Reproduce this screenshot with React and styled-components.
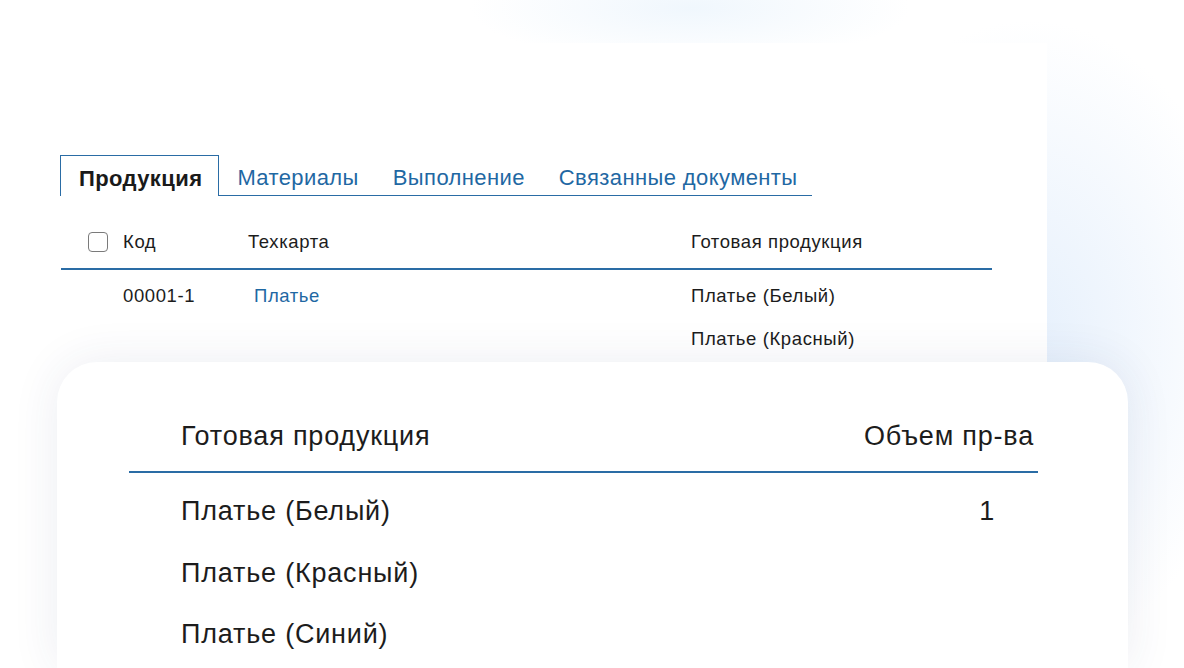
import styled, { createGlobalStyle } from "styled-components";

const GlobalStyle = createGlobalStyle`
  html, body {
    margin: 0;
    padding: 0;
    background: #fff;
  }
  body {
    font-family: "Liberation Sans", Arial, sans-serif;
    color: #1c1c1c;
  }
`;

const blue = "#2a6ca5";
const link = "#1f68a3";

const Page = styled.div`
  width: 1184px;
  height: 668px;
  overflow: hidden;
  background:
    radial-gradient(ellipse 220px 55px at 690px 8px, #f0f7fd 0%, rgba(240, 247, 253, 0) 100%),
    radial-gradient(ellipse 220px 320px at 1030px 340px, #e6f0fc 0%, rgba(230, 240, 252, 0) 100%),
    #fff;
  display: flex;
  flex-direction: column;
`;

const BackPanel = styled.section`
  width: 1047px;
  height: 319px;
  margin-top: 43px;
  padding: 112px 0 0 60px;
  box-sizing: border-box;
  background: #fff;
`;

const Tabs = styled.nav`
  display: flex;
  align-items: flex-end;
`;

const Tab = styled.div`
  height: 41px;
  box-sizing: border-box;
  display: flex;
  align-items: center;
  font-size: 22px;
  letter-spacing: 0.4px;
  padding: ${(p) => (p.$active ? "5px 16px 0 18px" : "5px 17px 0 17px")};
  color: ${(p) => (p.$active ? "#1a1a1a" : link)};
  font-weight: ${(p) => (p.$active ? 700 : 400)};
  border: ${(p) => (p.$active ? `1.5px solid ${blue}` : "none")};
  border-bottom: ${(p) => (p.$active ? "none" : `1.5px solid ${blue}`)};
  &:nth-child(2) {
    padding-left: 18px;
  }
  &:last-child {
    padding-right: 14px;
  }
`;

const Table = styled.div`
  width: 931px;
  margin-top: 20px;
  margin-left: 1px;
  font-size: 18.5px;
  letter-spacing: 0.6px;
`;

const HeadRow = styled.div`
  display: grid;
  grid-template-columns: 62px 125px 443px 1fr;
  align-items: center;
  height: 52px;
  border-bottom: 2px solid ${blue};
`;

const BodyRow = styled.div`
  display: grid;
  grid-template-columns: 62px 125px 443px 1fr;
  align-items: start;
  padding-top: 4px;
  line-height: 43px;
`;

const CheckCell = styled.div`
  display: flex;
  align-items: center;
  padding-left: 27px;
`;

const Checkbox = styled.span`
  width: 20px;
  height: 20px;
  box-sizing: border-box;
  border: 1.5px solid #7a7a7a;
  border-radius: 4px;
  background: #fff;
`;

const Cell = styled.div`
  color: ${(p) => (p.$link ? link : "#1c1c1c")};
  padding-left: ${(p) => (p.$link ? "6px" : "0")};
`;

const Card = styled.section`
  width: 1071px;
  margin-left: 57px;
  flex: 1;
  background: #fff;
  border-radius: 40px 40px 0 0;
  box-shadow: 0 0 48px rgba(40, 60, 110, 0.09);
  padding: 50px 0 0 72px;
  box-sizing: border-box;
  font-size: 27px;
  letter-spacing: 0.8px;
`;

const CardTable = styled.div`
  width: 909px;
`;

const CardHead = styled.div`
  display: flex;
  justify-content: space-between;
  line-height: 48px;
  padding: 0 4px 11px 52px;
  border-bottom: 2.5px solid ${blue};
`;

const CardBody = styled.div`
  padding-top: 8px;
`;

const CardRow = styled.div`
  display: flex;
  justify-content: space-between;
  line-height: 61.5px;
  padding: 0 43px 0 52px;
`;

const products = ["Платье (Белый)", "Платье (Красный)", "Платье (Синий)"];

export default function App() {
  return (
    <Page>
      <GlobalStyle />
      <BackPanel>
        <Tabs>
          <Tab $active>Продукция</Tab>
          <Tab>Материалы</Tab>
          <Tab>Выполнение</Tab>
          <Tab>Связанные документы</Tab>
        </Tabs>
        <Table>
          <HeadRow>
            <CheckCell>
              <Checkbox />
            </CheckCell>
            <Cell>Код</Cell>
            <Cell>Техкарта</Cell>
            <Cell>Готовая продукция</Cell>
          </HeadRow>
          <BodyRow>
            <div />
            <Cell>00001-1</Cell>
            <Cell $link>Платье</Cell>
            <Cell>
              <div>Платье (Белый)</div>
              <div>Платье (Красный)</div>
            </Cell>
          </BodyRow>
        </Table>
      </BackPanel>
      <Card>
        <CardTable>
          <CardHead>
            <span>Готовая продукция</span>
            <span>Объем пр-ва</span>
          </CardHead>
          <CardBody>
            {products.map((name, i) => (
              <CardRow key={name}>
                <span>{name}</span>
                <span>{i === 0 ? "1" : ""}</span>
              </CardRow>
            ))}
          </CardBody>
        </CardTable>
      </Card>
    </Page>
  );
}
